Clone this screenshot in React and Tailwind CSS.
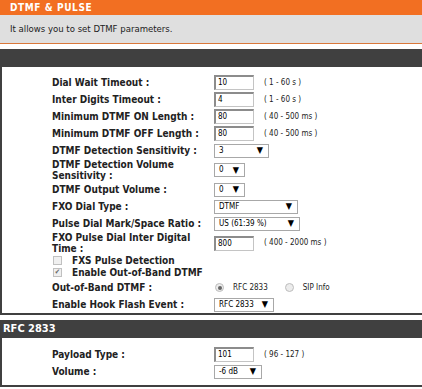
import React from 'react';

const font = { fontFamily: '"DejaVu Sans Condensed", Tahoma, "Liberation Sans", sans-serif' };

const Arrow = () => <span className="text-[9px] leading-none text-black">▼</span>;

const TextBox = ({ value, hint }) => (
    <div className="flex items-center">
        <div className="w-[40px] h-[15px] border border-[#c4c4c4] border-t-2 border-l-2 border-t-[#8c8c8c] border-l-[#8c8c8c] bg-white pl-[2px] text-[8px] leading-[11px] text-black">
            {value}
        </div>
        <span className="ml-[10px] text-[8px] text-[#222]">{hint}</span>
    </div>
);

const Select = ({ value, width }) => (
    <div
        className={`${width} h-[14px] border border-[#a8a8a8] bg-white flex items-center justify-between pl-[4px] pr-[5px] text-[8px] text-black`}
    >
        <span>{value}</span>
        <Arrow />
    </div>
);

const Row = ({ label, children, tall }) => (
    <div className={`flex items-center ${tall ? 'h-[22px]' : 'h-[17px]'}`}>
        <div className="w-[162px] text-[10px] font-bold leading-[11px] text-[#222]">{label}</div>
        <div>{children}</div>
    </div>
);

const Check = ({ checked, label }) => (
    <div className="flex items-center h-[12.5px]">
        <div className="w-[9px] h-[9px] ml-[1px] border border-[#c0c0c0] bg-[#f0f0f0] text-[7px] leading-[7px] text-[#666] flex items-center justify-center">
            {checked ? '✔' : ''}
        </div>
        <span className="ml-[10px] text-[10px] font-bold text-[#222]">{label}</span>
    </div>
);

const Radio = ({ checked, label }) => (
    <div className="flex items-center">
        <div className="w-[9px] h-[9px] rounded-full border border-[#bdbdbd] bg-[#ececec] flex items-center justify-center">
            {checked && <div className="w-[4px] h-[4px] rounded-full bg-[#666]" />}
        </div>
        <span className="ml-[9px] text-[8px] text-[#222]">{label}</span>
    </div>
);

export default function App() {
    return (
        <div className="w-[422px] h-[389px] bg-white overflow-hidden" style={font}>
            <div className="h-[15px] bg-[#f26f22] pl-[10px] flex items-center text-[10px] font-bold tracking-[0.6px] text-white">
                DTMF &amp; PULSE
            </div>
            <div className="h-[29px] bg-[#dfdfdf] border-b border-b-[#d9773a] pl-[10px] flex items-center text-[9.5px] text-[#222]">
                It allows you to set DTMF parameters.
            </div>
            <div className="h-[5px]" />
            <div className="h-[18px] bg-[#404040]" />
            <div className="border-l-2 border-b-2 border-[#404040] pl-[50px] pt-[7px]">
                <Row label="Dial Wait Timeout :"><TextBox value="10" hint="( 1 - 60 s )" /></Row>
                <Row label="Inter Digits Timeout :"><TextBox value="4" hint="( 1 - 60 s )" /></Row>
                <Row label="Minimum DTMF ON Length :"><TextBox value="80" hint="( 40 - 500 ms )" /></Row>
                <Row label="Minimum DTMF OFF Length :"><TextBox value="80" hint="( 40 - 500 ms )" /></Row>
                <Row label="DTMF Detection Sensitivity :"><Select value="3" width="w-[55px]" /></Row>
                <Row label="DTMF Detection Volume Sensitivity :" tall><Select value="0" width="w-[31px]" /></Row>
                <Row label="DTMF Output Volume :"><Select value="0" width="w-[31px]" /></Row>
                <Row label="FXO Dial Type :"><Select value="DTMF" width="w-[84px]" /></Row>
                <Row label="Pulse Dial Mark/Space Ratio :"><Select value="US (61:39 %)" width="w-[86px]" /></Row>
                <Row label="FXO Pulse Dial Inter Digital Time :" tall><TextBox value="800" hint="( 400 - 2000 ms )" /></Row>
                <Check label="FXS Pulse Detection" />
                <Check checked label="Enable Out-of-Band DTMF" />
                <Row label="Out-of-Band DTMF :">
                    <div className="flex items-center gap-[17px] pl-[1px]">
                        <Radio checked label="RFC 2833" />
                        <Radio label="SIP Info" />
                    </div>
                </Row>
                <Row label="Enable Hook Flash Event :"><Select value="RFC 2833" width="w-[60px]" /></Row>
            </div>
            <div className="h-[5px]" />
            <div className="h-[18px] bg-[#404040] pl-[3px] flex items-center text-[11px] font-bold text-white">
                RFC 2833
            </div>
            <div className="border-l-2 border-b-2 border-[#404040] pl-[50px] pt-[8px] pb-[5px]">
                <Row label="Payload Type :"><TextBox value="101" hint="( 96 - 127 )" /></Row>
                <Row label="Volume :"><Select value="-6 dB" width="w-[48px]" /></Row>
            </div>
        </div>
    );
}
